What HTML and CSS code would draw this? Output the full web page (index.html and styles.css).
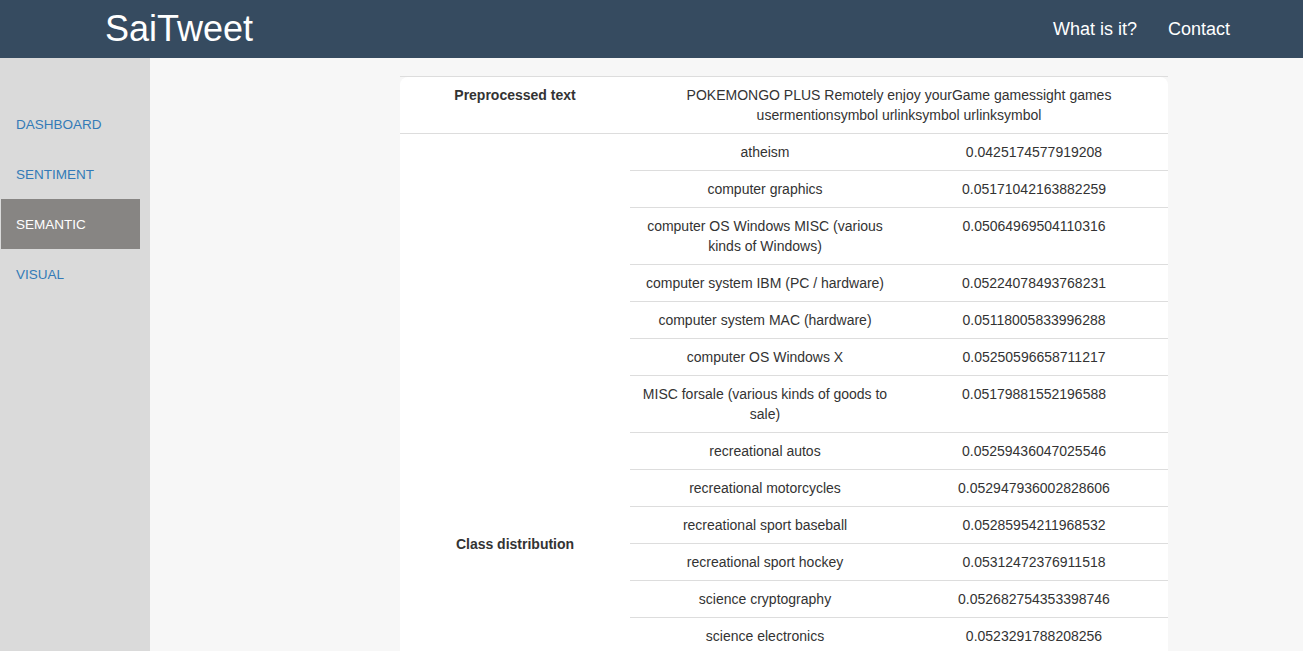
FILE: index.html
```html
<!DOCTYPE html>
<html>
<head>
<meta charset="utf-8">
<title>SaiTweet</title>
<link rel="stylesheet" href="styles.css">
</head>
<body>
<header class="topbar">
  <a class="brand" href="#">SaiTweet</a>
  <nav class="topnav">
    <a href="#">What is it?</a>
    <a href="#">Contact</a>
  </nav>
</header>
<div class="layout">
  <aside class="sidebar">
    <ul class="sidenav">
      <li><a href="#">DASHBOARD</a></li>
      <li><a href="#">SENTIMENT</a></li>
      <li class="active"><a href="#">SEMANTIC</a></li>
      <li><a href="#">VISUAL</a></li>
    </ul>
  </aside>
  <main class="content">
    <div class="panel-wrap">
      <div class="panel">
        <table class="result">
          <colgroup><col class="c-key"><col class="c-val"></colgroup>
          <tr class="row-text">
            <th>Preprocessed text</th>
            <td>POKEMONGO PLUS Remotely enjoy yourGame gamessight games usermentionsymbol urlinksymbol urlinksymbol</td>
          </tr>
          <tr class="row-dist">
            <th>Class distribution</th>
            <td class="nested-cell">
              <table class="dist">
                <colgroup><col class="d-label"><col class="d-val"></colgroup>
                <tr><td>atheism</td><td>0.0425174577919208</td></tr>
                <tr><td>computer graphics</td><td>0.05171042163882259</td></tr>
                <tr><td>computer OS Windows MISC (various kinds of Windows)</td><td>0.05064969504110316</td></tr>
                <tr><td>computer system IBM (PC / hardware)</td><td>0.05224078493768231</td></tr>
                <tr><td>computer system MAC (hardware)</td><td>0.05118005833996288</td></tr>
                <tr><td>computer OS Windows X</td><td>0.05250596658711217</td></tr>
                <tr><td>MISC forsale (various kinds of goods to sale)</td><td>0.05179881552196588</td></tr>
                <tr><td>recreational autos</td><td>0.05259436047025546</td></tr>
                <tr><td>recreational motorcycles</td><td>0.052947936002828606</td></tr>
                <tr><td>recreational sport baseball</td><td>0.05285954211968532</td></tr>
                <tr><td>recreational sport hockey</td><td>0.05312472376911518</td></tr>
                <tr><td>science cryptography</td><td>0.052682754353398746</td></tr>
                <tr><td>science electronics</td><td>0.0523291788208256</td></tr>
                <tr><td>science medicine</td><td>0.05197560328453901</td></tr>
                <tr><td>science space</td><td>0.05153363435305206</td></tr>
                <tr><td>social religion christian (christianity and related topics)</td><td>0.04808984709400371</td></tr>
                <tr><td>talk politics guns</td><td>0.04914057242331772</td></tr>
                <tr><td>talk politics mideast (middle east politics and conflicts)</td><td>0.04826663486218621</td></tr>
                <tr><td>talk politics MISC</td><td>0.04782466593070126</td></tr>
                <tr><td>talk religion MISC</td><td>0.04136451352001385</td></tr>
              </table>
            </td>
          </tr>
        </table>
      </div>
    </div>
  </main>
</div>
</body>
</html>
```
FILE: styles.css
```css
* { box-sizing: border-box; }
html, body { margin: 0; padding: 0; height: 100%; overflow: hidden; }
body {
  font-family: "Liberation Sans", Arial, Helvetica, sans-serif;
  font-size: 14px;
  line-height: 20px;
  color: #333;
  background: #f7f7f7;
  display: flex;
  flex-direction: column;
}
a { text-decoration: none; }

.topbar {
  height: 58px;
  flex: 0 0 58px;
  background: #364b60;
  display: flex;
  align-items: center;
  justify-content: space-between;
  padding: 0 73px 0 105px;
}
.brand {
  color: #fff;
  font-size: 36px;
  line-height: 40px;
  margin-top: -1px;
}
.topnav { display: flex; gap: 31px; }
.topnav a { color: #fff; font-size: 18px; line-height: 24px; }

.layout { flex: 1; display: flex; min-height: 0; }
.sidebar {
  width: 150px;
  flex: 0 0 150px;
  background: #dadada;
  padding: 41px 10px 0 1px;
}
.sidenav { list-style: none; margin: 0; padding: 0; }
.sidenav li a {
  display: block;
  height: 50px;
  line-height: 52px;
  padding-left: 15px;
  color: #337ab7;
  font-size: 13.5px;
  overflow: hidden;
}
.sidenav li.active a { background: #878583; color: #fff; }

.content { flex: 1; padding: 18px 0 0 250px; overflow: hidden; }
.panel-wrap { width: 768px; border-top: 1px solid #ddd; }
.panel { background: #fff; border-radius: 8px 8px 0 0; }

.result { width: 100%; border-collapse: collapse; table-layout: fixed; }
.c-key { width: 230px; }
.result th, .result > tbody > tr > td {
  padding: 8px;
  text-align: center;
  font-weight: normal;
}
.result th { font-weight: bold; }
.row-text th, .row-text td { vertical-align: top; }
.row-dist th { vertical-align: middle; border-top: 1px solid #ddd; }
.row-dist > td.nested-cell { padding: 0; border-top: 1px solid #ddd; vertical-align: top; }

.dist { width: 100%; border-collapse: collapse; table-layout: fixed; }
.d-label { width: 270px; }
.dist td {
  padding: 8px;
  text-align: center;
  vertical-align: top;
  border-top: 1px solid #ddd;
}
.dist tr:first-child td { border-top: none; }
```
